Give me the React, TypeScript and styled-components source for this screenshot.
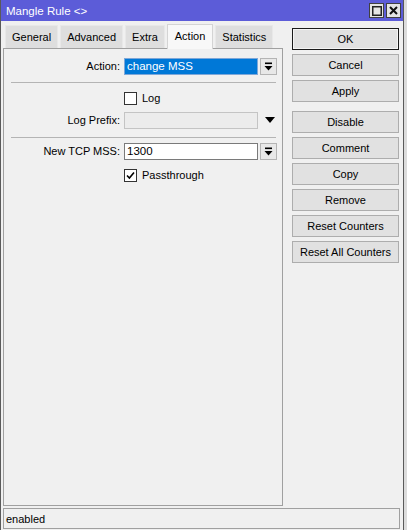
import React from 'react';
import styled, { createGlobalStyle } from 'styled-components';

const GlobalStyle = createGlobalStyle`
  html, body {
    margin: 0;
    padding: 0;
    background: #dcdcdc;
  }
  body {
    font-family: "Liberation Sans", Arial, sans-serif;
    font-size: 11px;
    color: #000;
  }
`;

const Window = styled.div`
  width: 402px;
  height: 530px;
  display: flex;
  flex-direction: column;
  background: #f0f0f0;
  border-left: 1px solid #5a5a5a;
  border-right: 1px solid #5a5a5a;
  overflow: hidden;
`;

const TitleBar = styled.div`
  height: 21px;
  flex: none;
  display: flex;
  align-items: center;
  background: #5c5cd8;
  color: #fff;
  padding: 0 2px 0 5px;
`;

const Title = styled.span`
  flex: 1;
  font-size: 11.5px;
`;

const TitleButton = styled.div`
  width: 13px;
  height: 13px;
  margin-left: 2px;
  display: flex;
  align-items: center;
  justify-content: center;
  background: #e4e4e4;
  border: 1px solid #404040;
`;

const Main = styled.div`
  flex: 1;
  display: flex;
  padding: 0 2px 0 2px;
  min-height: 0;
`;

const LeftColumn = styled.div`
  width: 280px;
  display: flex;
  flex-direction: column;
`;

const TabStrip = styled.div`
  display: flex;
  align-items: flex-end;
  height: 27px;
  padding-left: 2px;
  gap: 2px;
`;

const Tab = styled.div<{ $active?: boolean }>`
  height: ${p => (p.$active ? 25 : 23)}px;
  padding: 0 ${p => (p.$active ? 7 : 6)}px;
  display: flex;
  align-items: center;
  padding-bottom: ${p => (p.$active ? 3 : 0)}px;
  box-sizing: border-box;
  background: ${p => (p.$active ? '#f8f8f8' : '#dedede')};
  border: 1px solid ${p => (p.$active ? '#d4d4d4' : '#e8e8e8')};
  border-bottom: none;
  margin-bottom: ${p => (p.$active ? -1 : 0)}px;
  position: relative;
`;

const Panel = styled.div`
  flex: 1;
  border: 1px solid #a0a0a0;
  padding-top: 8px;
  display: flex;
  flex-direction: column;
`;

const Row = styled.div<{ $top?: number }>`
  display: flex;
  align-items: center;
  height: 18px;
  margin-top: ${p => p.$top ?? 0}px;
`;

const Label = styled.span`
  width: 116px;
  text-align: right;
  padding-right: 4px;
  flex: none;
`;

const Field = styled.div<{ $variant?: 'selected' | 'disabled' }>`
  width: 130px;
  height: 15px;
  margin-right: 2px;
  display: flex;
  align-items: center;
  padding-left: 2px;
  border: 1px solid ${p => (p.$variant === 'selected' ? '#7ea7d8' : p.$variant === 'disabled' ? '#c4c4c4' : '#7a7a7a')};
  background: ${p => (p.$variant === 'selected' ? '#0078d7' : p.$variant === 'disabled' ? '#ececec' : '#fff')};
  color: ${p => (p.$variant === 'selected' ? '#fff' : '#000')};
  font-size: 11.5px;
`;

const DropButton = styled.div`
  width: 15px;
  height: 15px;
  border: 1px solid #b4b4b4;
  background: #e8e8e8;
  display: flex;
  align-items: center;
  justify-content: center;
`;

const Arrow = styled.div`
  margin-left: 5px;
  display: flex;
  align-items: center;
`;

const Separator = styled.div<{ $top: number; $bottom: number }>`
  height: 1px;
  background: #b4b4b4;
  margin: ${p => p.$top}px 6px ${p => p.$bottom}px 7px;
`;

const CheckRow = styled.label`
  display: flex;
  align-items: center;
  gap: 5px;
  margin-left: 120px;
`;

const Box = styled.span`
  width: 11px;
  height: 11px;
  border: 1px solid #333;
  background: #fff;
  display: flex;
  align-items: center;
  justify-content: center;
`;

const RightColumn = styled.div`
  width: 107px;
  margin-left: 9px;
  padding-top: 7px;
  display: flex;
  flex-direction: column;
`;

const Button = styled.div<{ $primary?: boolean; $gap?: number }>`
  height: 20px;
  margin-top: ${p => p.$gap ?? 4}px;
  display: flex;
  align-items: center;
  justify-content: center;
  background: #e1e1e1;
  border: 1px solid ${p => (p.$primary ? '#1a1a1a' : '#adadad')};
  box-shadow: ${p => (p.$primary ? 'inset 0 0 0 1px #f4f4f4' : 'none')};
`;

const StatusBar = styled.div`
  height: 19px;
  flex: none;
  margin: 2px 3px 1px 2px;
  border: 1px solid #a0a0a0;
  display: flex;
  align-items: center;
  padding-left: 2px;
`;

const DropIcon = () => (
  <svg width="9" height="9" viewBox="0 0 9 9">
    <rect x="1" y="0.5" width="7" height="1.6" fill="#000" />
    <path d="M0.5 4 L8.5 4 L4.5 8.5 Z" fill="#000" />
  </svg>
);

const CheckMark = () => (
  <svg width="9" height="9" viewBox="0 0 9 9">
    <path d="M1 4.5 L3.4 7 L8 1.5" stroke="#000" strokeWidth="1.6" fill="none" />
  </svg>
);

const buttons: { text: string; gap?: number; primary?: boolean }[] = [
  { text: 'OK', gap: 0, primary: true },
  { text: 'Cancel' },
  { text: 'Apply' },
  { text: 'Disable', gap: 9 },
  { text: 'Comment' },
  { text: 'Copy' },
  { text: 'Remove' },
  { text: 'Reset Counters' },
  { text: 'Reset All Counters' },
];

const tabs = ['General', 'Advanced', 'Extra', 'Action', 'Statistics'];

const App: React.FC = () => (
  <>
    <GlobalStyle />
    <Window>
      <TitleBar>
        <Title>Mangle Rule &lt;&gt;</Title>
        <TitleButton>
          <svg width="10" height="10" viewBox="0 0 10 10">
            <rect x="0.75" y="0.75" width="8.5" height="8.5" fill="none" stroke="#222" strokeWidth="1.5" />
          </svg>
        </TitleButton>
        <TitleButton>
          <svg width="9" height="9" viewBox="0 0 9 9">
            <path d="M1 1 L8 8 M8 1 L1 8" stroke="#111" strokeWidth="2" />
          </svg>
        </TitleButton>
      </TitleBar>
      <Main>
        <LeftColumn>
          <TabStrip>
            {tabs.map(t => (
              <Tab key={t} $active={t === 'Action'}>{t}</Tab>
            ))}
          </TabStrip>
          <Panel>
            <Row>
              <Label>Action:</Label>
              <Field $variant="selected">change MSS</Field>
              <DropButton><DropIcon /></DropButton>
            </Row>
            <Separator $top={7} $bottom={6} />
            <Row>
              <CheckRow>
                <Box />
                Log
              </CheckRow>
            </Row>
            <Row $top={4}>
              <Label>Log Prefix:</Label>
              <Field $variant="disabled" />
              <Arrow>
                <svg width="10" height="6" viewBox="0 0 10 6">
                  <path d="M0 0 L10 0 L5 6 Z" fill="#000" />
                </svg>
              </Arrow>
            </Row>
            <Separator $top={8} $bottom={4} />
            <Row>
              <Label>New TCP MSS:</Label>
              <Field>1300</Field>
              <DropButton><DropIcon /></DropButton>
            </Row>
            <Row $top={6}>
              <CheckRow>
                <Box><CheckMark /></Box>
                Passthrough
              </CheckRow>
            </Row>
          </Panel>
        </LeftColumn>
        <RightColumn>
          {buttons.map(b => (
            <Button key={b.text} $primary={b.primary} $gap={b.gap}>{b.text}</Button>
          ))}
        </RightColumn>
      </Main>
      <StatusBar>enabled</StatusBar>
    </Window>
  </>
);

export default App;
